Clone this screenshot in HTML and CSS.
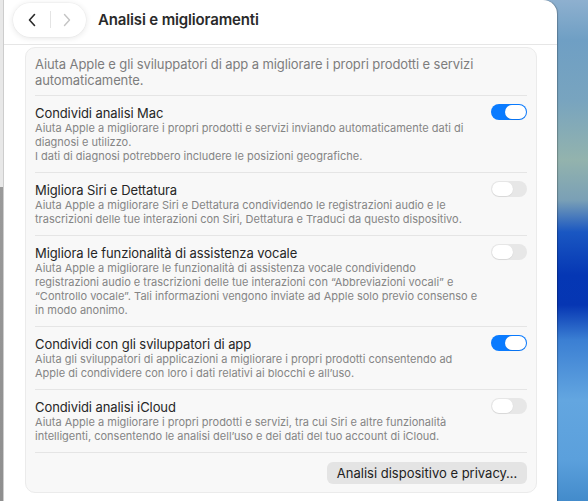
FILE: index.html
```html
<!DOCTYPE html>
<html lang="it">
<head>
<meta charset="utf-8">
<title>Analisi e miglioramenti</title>
<link rel="stylesheet" href="styles.css">
</head>
<body>
<div class="desktop">
  <div class="window">
    <div class="edge"></div>
    <div class="pane">
      <header class="header">
        <div class="nav-pill">
          <span class="nav-btn nav-back">
            <svg width="10" height="14" viewBox="0 0 10 14"><path d="M7.5 1.5 L2.5 7 L7.5 12.5" fill="none" stroke="#2a2a2a" stroke-width="1.6" stroke-linecap="round" stroke-linejoin="round"/></svg>
          </span>
          <span class="nav-divider"></span>
          <span class="nav-btn nav-fwd">
            <svg width="10" height="14" viewBox="0 0 10 14"><path d="M2.5 1.5 L7.5 7 L2.5 12.5" fill="none" stroke="#c4c4c4" stroke-width="1.4" stroke-linecap="round" stroke-linejoin="round"/></svg>
          </span>
        </div>
        <h1 class="title">Analisi e miglioramenti</h1>
      </header>

      <section class="group">
        <p class="intro">Aiuta Apple e gli sviluppatori di app a migliorare i propri prodotti e servizi<br>automaticamente.</p>

        <div class="row">
          <div class="row-text">
            <div class="row-title">Condividi analisi Mac</div>
            <div class="row-desc">Aiuta Apple a migliorare i propri prodotti e servizi inviando automaticamente dati di<br>diagnosi e utilizzo.<br>I dati di diagnosi potrebbero includere le posizioni geografiche.</div>
          </div>
          <span class="toggle on"><span class="knob"></span></span>
        </div>

        <div class="row">
          <div class="row-text">
            <div class="row-title">Migliora Siri e Dettatura</div>
            <div class="row-desc">Aiuta Apple a migliorare Siri e Dettatura condividendo le registrazioni audio e le<br>trascrizioni delle tue interazioni con Siri, Dettatura e Traduci da questo dispositivo.</div>
          </div>
          <span class="toggle"><span class="knob"></span></span>
        </div>

        <div class="row">
          <div class="row-text">
            <div class="row-title">Migliora le funzionalità di assistenza vocale</div>
            <div class="row-desc">Aiuta Apple a migliorare le funzionalità di assistenza vocale condividendo<br>registrazioni audio e trascrizioni delle tue interazioni con “Abbreviazioni vocali” e<br>“Controllo vocale”. Tali informazioni vengono inviate ad Apple solo previo consenso e<br>in modo anonimo.</div>
          </div>
          <span class="toggle"><span class="knob"></span></span>
        </div>

        <div class="row">
          <div class="row-text">
            <div class="row-title">Condividi con gli sviluppatori di app</div>
            <div class="row-desc">Aiuta gli sviluppatori di applicazioni a migliorare i propri prodotti consentendo ad<br>Apple di condividere con loro i dati relativi ai blocchi e all’uso.</div>
          </div>
          <span class="toggle on"><span class="knob"></span></span>
        </div>

        <div class="row">
          <div class="row-text">
            <div class="row-title">Condividi analisi iCloud</div>
            <div class="row-desc">Aiuta Apple a migliorare i propri prodotti e servizi, tra cui Siri e altre funzionalità<br>intelligenti, consentendo le analisi dell’uso e dei dati del tuo account di iCloud.</div>
          </div>
          <span class="toggle"><span class="knob"></span></span>
        </div>

        <div class="button-row">
          <button class="btn" type="button">Analisi dispositivo e privacy…</button>
        </div>
      </section>
    </div>
  </div>
</div>
</body>
</html>
```

FILE: styles.css
```css
* { box-sizing: border-box; }

html, body {
  margin: 0;
  padding: 0;
}

body {
  width: 588px;
  height: 501px;
  overflow: hidden;
  font-family: "Inter", "Noto Sans", sans-serif;
  background: linear-gradient(to bottom,
    #8eb0cf 0px,
    #6f9fc4 40px,
    #78a4bf 100px,
    #93b3ad 160px,
    #7aa0b6 200px,
    #1a57c2 232px,
    #0537b4 275px,
    #0636b3 305px,
    #3b7fd3 340px,
    #63a6e0 400px,
    #5ba0dc 460px,
    #438bcb 501px);
}

.desktop {
  display: flex;
  height: 501px;
}

.window {
  width: 557px;
  height: 501px;
  display: flex;
  background: #ffffff;
  border-top-right-radius: 14px;
  box-shadow: 1px 0 1px rgba(0, 0, 0, 0.25);
}

.edge {
  width: 4px;
  flex: none;
  background: linear-gradient(to bottom, #e8e8e8 0, #e8e8e8 187px, #9a9a9a 187px, #8f8f8f 501px);
  border-right: 1px solid #cdcdcd;
}

.pane {
  flex: 1;
  display: flex;
  flex-direction: column;
  min-width: 0;
}

.header {
  height: 45px;
  flex: none;
  display: flex;
  align-items: center;
  padding: 0 0 5px 9px;
  border-bottom: 1px solid #e6e6e6;
}

.nav-pill {
  width: 73px;
  height: 34px;
  border-radius: 17px;
  background: #ffffff;
  display: flex;
  align-items: center;
  box-shadow: 0 1px 6px rgba(0, 0, 0, 0.11), 0 0 0 0.5px rgba(0, 0, 0, 0.04);
}

.nav-btn {
  display: flex;
  align-items: center;
  justify-content: center;
  height: 34px;
}

.nav-back { width: 37px; }
.nav-fwd { width: 31px; }

.nav-divider {
  width: 1px;
  height: 17px;
  background: #e4e4e4;
}

.title {
  margin: 0 0 0 12px;
  font-size: 15px;
  line-height: 20px;
  font-weight: 600;
  color: #2a2a2a;
  letter-spacing: -0.15px;
}

.group {
  margin: 2px 20px 0 21px;
  background: #f8f8f8;
  border: 1px solid #ebebeb;
  border-radius: 10px;
  padding: 0 9px;
}

.intro {
  margin: 0;
  padding: 8px 0 7px;
  font-size: 13px;
  line-height: 16px;
  color: #7d7d7d;
  letter-spacing: -0.1px;
}

.row {
  display: flex;
  align-items: flex-start;
  border-top: 1px solid #e5e5e5;
  padding: 9px 0;
}

.row-text {
  flex: 1;
  min-width: 0;
}

.row-title {
  font-size: 13px;
  line-height: 16px;
  color: #262626;
  letter-spacing: -0.08px;
}

.row-desc {
  font-size: 11px;
  line-height: 14px;
  color: #858585;
}

.toggle {
  flex: none;
  position: relative;
  width: 36px;
  height: 16px;
  margin-top: -1px;
  border-radius: 8px;
  background: #e7e7e7;
}

.toggle.on {
  background: #0a7bff;
}

.knob {
  position: absolute;
  top: 1px;
  left: 1px;
  width: 21px;
  height: 14px;
  border-radius: 7px;
  background: #ffffff;
  box-shadow: 0 0.5px 1px rgba(0, 0, 0, 0.12);
}

.toggle.on .knob {
  left: auto;
  right: 1px;
}

.button-row {
  display: flex;
  justify-content: flex-end;
  border-top: 1px solid #e5e5e5;
  padding: 9px 0 8px;
}

.btn {
  width: 200px;
  height: 22px;
  border: none;
  border-radius: 6px;
  background: #e4e4e4;
  font-family: inherit;
  font-size: 13px;
  color: #222222;
  padding: 0;
}
```
